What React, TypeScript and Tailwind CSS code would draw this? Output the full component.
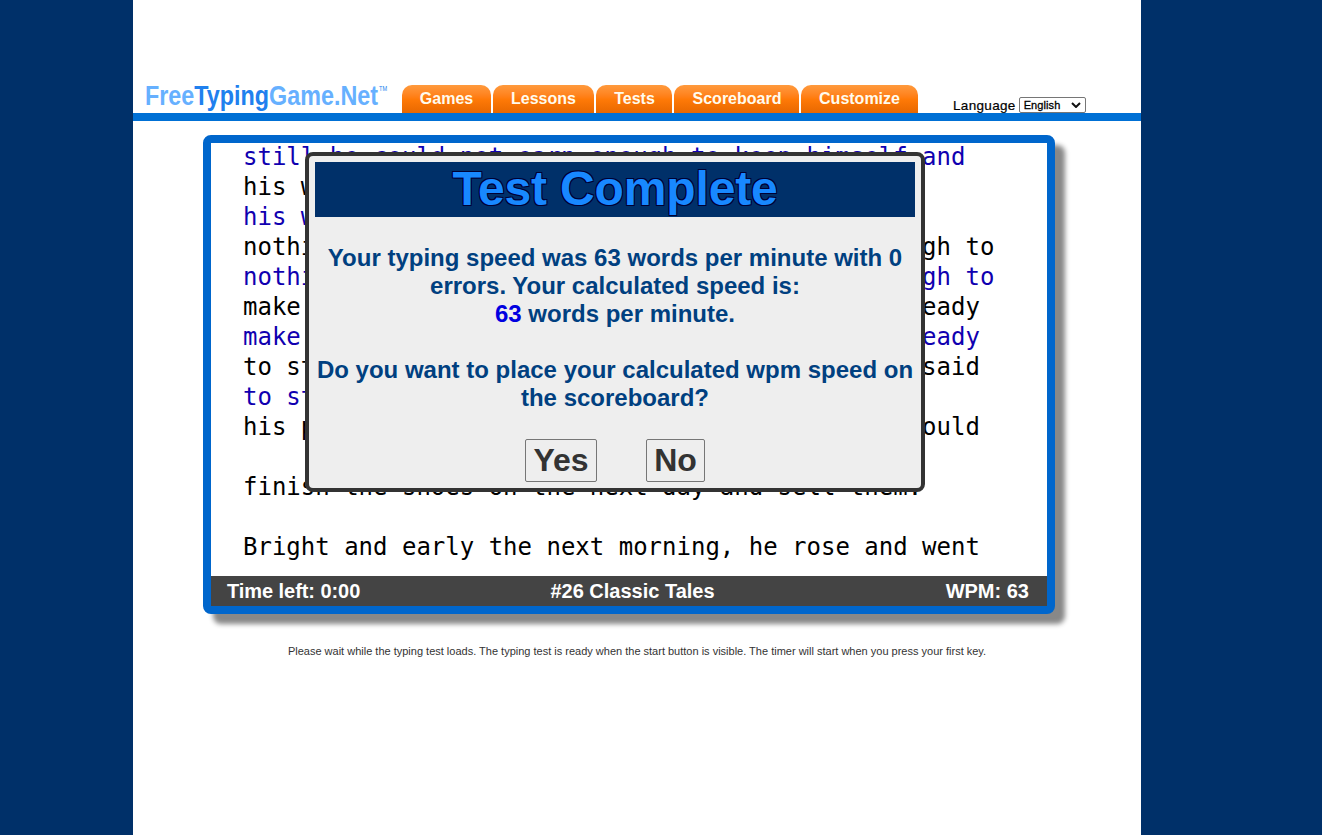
import clsx from "clsx";

type StoryLine = {
  text: string;
  typed?: boolean;
};

// Typed lines sit under the line they repeat, blanks keep the rhythm.
const storyLines: StoryLine[] = [
  { text: "still he could not earn enough to keep himself and", typed: true },
  { text: "his wife." },
  { text: "his wife.", typed: true },
  { text: "nothing would be left but just leather big enough to" },
  { text: "nothing would be left but just leather big enough to", typed: true },
  { text: "make one pair of shoes. He cut them all out already" },
  { text: "make one pair of shoes. He cut them all out already", typed: true },
  { text: "to start sewing the very next day, and then he said" },
  { text: "to start sewing", typed: true },
  { text: "his prayers, went to bed early and trusted he would" },
  { text: "" },
  { text: "finish the shoes on the next day and sell them." },
  { text: "" },
  { text: "Bright and early the next morning, he rose and went" },
];

const tabs = [
  { label: "Games", width: "w-[89px]" },
  { label: "Lessons", width: "w-[101px]" },
  { label: "Tests", width: "w-[76px] pl-px" },
  { label: "Scoreboard", width: "w-[125px] pl-px" },
  { label: "Customize", width: "w-[117px]" },
];

function Logo() {
  return (
    <svg width="252" height="36" className="ml-3 shrink-0" aria-label="FreeTypingGame.Net">
      <text
        x="0"
        y="28"
        fontSize="27"
        fontWeight="bold"
        textLength="233"
        lengthAdjust="spacingAndGlyphs"
        fill="#66b0ff"
      >
        Free<tspan fill="#2080ee">Typing</tspan>Game.Net
      </text>
      <text x="234" y="14" fontSize="8" textLength="8" lengthAdjust="spacingAndGlyphs" fill="#2080ee">
        TM
      </text>
    </svg>
  );
}

function Header() {
  return (
    <header className="flex h-[121px] items-end border-b-8 border-[#0070d5]">
      <Logo />
      <nav className="ml-[5px] flex gap-0.5">
        {tabs.map((tab) => (
          <a
            key={tab.label}
            className={clsx(
              "h-7 rounded-t-[10px] bg-linear-to-b from-[#ff9a3c] via-[#ff7a08] to-[#e86800] text-center text-base leading-[27px] font-bold text-[#fffbee]",
              tab.width,
            )}
          >
            {tab.label}
          </a>
        ))}
      </nav>
      <label className="ml-[35px] text-[13.5px] leading-[15px] tracking-[0.32px] text-black [-webkit-text-stroke:0.2px_#000]">
        Language
      </label>
      <div className="ml-[3px] flex h-4 w-[67px] items-center justify-between rounded-[2px] border border-[#767676] bg-white pr-1 pl-1 text-[11px] leading-[14px] tracking-[0.1px] text-black [-webkit-text-stroke:0.3px_#000]">
        English
        <svg width="10" height="6" viewBox="0 0 10 6" fill="none" stroke="#111" strokeWidth="2">
          <path d="M1 1l4 4 4-4" />
        </svg>
      </div>
    </header>
  );
}

function ResultDialog() {
  return (
    <div className="absolute top-[9px] left-[94px] h-[340px] w-[620px] rounded-lg border-4 border-[#333] bg-[#eee] p-1.5 text-center font-bold text-[#004080]">
      <h1 className="h-[55px] bg-[#003069] text-5xl leading-[54px] tracking-[-0.15px] text-[#1888ff] [text-shadow:-1px_-1px_0_#000033,1px_-1px_0_#000033,-1px_1px_0_#000033,1px_1px_0_#000033]">
        Test Complete
      </h1>
      <p className="mt-[27px] text-2xl leading-7">
        Your typing speed was 63 words per minute with 0
        <br />
        errors. Your calculated speed is:
        <br />
        <span className="text-[#0000e0]">63</span> words per minute.
      </p>
      <p className="mt-7 text-2xl leading-7 whitespace-nowrap">
        Do you want to place your calculated wpm speed on
        <br />
        the scoreboard?
      </p>
      <div className="mt-[27px] flex justify-center gap-[49px] text-[32px] leading-[41px] text-[#333]">
        <button className="h-[43px] w-[72px] rounded-[2px] border border-[#767676] font-bold">Yes</button>
        <button className="h-[43px] w-[59px] rounded-[2px] border border-[#767676] font-bold">No</button>
      </div>
    </div>
  );
}

function TypingBoard() {
  return (
    <section className="relative mt-3.5 ml-[70px] flex h-[479px] w-[852px] flex-col rounded-lg border-8 border-[#0066cc] bg-white shadow-[10px_10px_5px_#888]">
      <div className="h-[433px] overflow-hidden pl-8 font-['DejaVu_Sans_Mono',monospace] text-2xl leading-[28px] whitespace-pre">
        {storyLines.map((line, index) => (
          <div key={index} className={clsx("h-[30px]", line.typed ? "text-[#1000b0]" : "text-black")}>
            {line.text}
          </div>
        ))}
      </div>
      <div className="grid h-[30px] grid-cols-3 bg-[#444] pr-[18px] pl-4 text-xl leading-[30px] font-bold text-white">
        <span className="tracking-[-0.06px]">Time left: 0:00</span>
        <span className="pl-[9px] text-center">#26 Classic Tales</span>
        <span className="text-right">WPM: 63</span>
      </div>
      <ResultDialog />
    </section>
  );
}

export default function App() {
  return (
    <div className="h-[835px] overflow-hidden bg-[#003069] pl-[133px] font-['Liberation_Sans',Arial,sans-serif]">
      <main className="h-full w-[1008px] bg-white">
        <Header />
        <TypingBoard />
        <p className="mt-[29px] text-center text-[11px] leading-4 text-[#333]">
          Please wait while the typing test loads. The typing test is ready when the start button is visible. The
          timer will start when you press your first key.
        </p>
      </main>
    </div>
  );
}
